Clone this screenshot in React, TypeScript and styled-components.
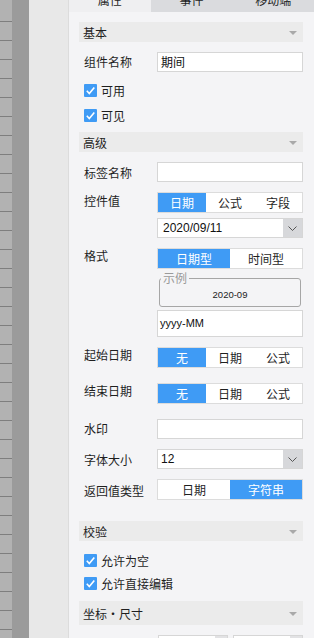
import React from "react";
import styled, { createGlobalStyle } from "styled-components";

const BLUE = "#3f9bf5";

const GlobalStyle = createGlobalStyle`
  * { box-sizing: border-box; }
  html, body {
    margin: 0;
    padding: 0;
    height: 638px;
    overflow: hidden;
  }
  body {
    font-family: "Noto Sans CJK SC", "Noto Sans", sans-serif;
    font-size: 12px;
    color: #1f1f1f;
  }
`;

const Page = styled.div`
  display: flex;
  width: 314px;
  height: 638px;
  overflow: hidden;
`;

const RulerStrip = styled.div`
  width: 12px;
  flex-shrink: 0;
  background: #b2b2b2;
  padding-top: 3px;
`;

const RulerTicks = styled.div`
  height: 100%;
  background: repeating-linear-gradient(
    to bottom,
    transparent 0 18px,
    #7e7e7e 18px 19px
  );
`;

const DarkStrip = styled.div`
  width: 17px;
  flex-shrink: 0;
  background: #9b9b9b;
`;

const Gutter = styled.div`
  width: 40px;
  flex-shrink: 0;
  background: #e8e8e8;
  border-right: 1px solid #dcdcdc;
`;

const Panel = styled.div`
  flex: 1;
  display: flex;
  flex-direction: column;
  background: #f4f4f6;
  min-width: 0;
`;

const TabBar = styled.div`
  display: grid;
  grid-template-columns: repeat(3, 1fr);
  height: 24px;
  margin-top: -12px;
  flex-shrink: 0;
`;

const Tab = styled.div<{ $active?: boolean }>`
  text-align: center;
  line-height: 24px;
  font-size: 12px;
  background: ${(p) => (p.$active ? "#efeff1" : "#dadbde")};
`;

const Content = styled.div`
  padding: 0 11px 0 10px;
  display: flex;
  flex-direction: column;
`;

const SectionHeader = styled.div<{ $mt: number; $h?: number }>`
  display: flex;
  justify-content: space-between;
  align-items: center;
  height: ${(p) => p.$h ?? 20}px;
  margin-top: ${(p) => p.$mt}px;
  padding: 0 6px 0 4px;
  background: #ebebeb;
  flex-shrink: 0;
`;

const Caret = styled.span`
  width: 0;
  height: 0;
  border-left: 4px solid transparent;
  border-right: 4px solid transparent;
  border-top: 4px solid #a9a9a9;
  margin-top: 2px;
`;

const Row = styled.div<{ $mt: number }>`
  display: flex;
  align-items: flex-start;
  margin-top: ${(p) => p.$mt}px;
  flex-shrink: 0;
`;

const Label = styled.div<{ $pt: number }>`
  width: 78px;
  flex-shrink: 0;
  padding-left: 5px;
  padding-top: ${(p) => p.$pt}px;
  line-height: 16px;
  white-space: nowrap;
`;

const Field = styled.div`
  flex: 1;
  min-width: 0;
  display: flex;
  flex-direction: column;
`;

const TextInput = styled.div<{ $h?: number; $mono?: boolean }>`
  height: ${(p) => p.$h ?? 20}px;
  line-height: ${(p) => (p.$h ?? 20) - 2}px;
  background: #fff;
  border: 1px solid #d6d6d6;
  padding-left: ${(p) => (p.$mono ? 2 : 3)}px;
  font-family: ${(p) =>
    p.$mono ? '"Liberation Sans", Arial, sans-serif' : "inherit"};
  font-size: ${(p) => (p.$mono ? 11 : 12)}px;
  color: #111;
`;

const Segmented = styled.div<{ $mt?: number }>`
  display: flex;
  height: 21px;
  margin-top: ${(p) => p.$mt ?? 0}px;
  background: #fff;
  border: 1px solid #dcdcdc;
`;

const Segment = styled.div<{ $active?: boolean }>`
  flex: 1;
  text-align: center;
  line-height: 19px;
  background: ${(p) => (p.$active ? BLUE : "transparent")};
  color: ${(p) => (p.$active ? "#fff" : "#1f1f1f")};
`;

const Select = styled.div<{ $mt?: number }>`
  display: flex;
  height: 20px;
  margin-top: ${(p) => p.$mt ?? 0}px;
  background: #fff;
  border: 1px solid #d6d6d6;
`;

const SelectValue = styled.div<{ $pl: number }>`
  flex: 1;
  padding-left: ${(p) => p.$pl}px;
  line-height: 18px;
  font-family: "Liberation Sans", Arial, sans-serif;
  font-size: 12px;
  color: #111;
`;

const SelectButton = styled.div`
  width: 19px;
  background: #d7d8db;
  display: flex;
  align-items: center;
  justify-content: center;
`;

const Example = styled.fieldset`
  margin: 3px 2px 0;
  padding: 0;
  min-width: 0;
  border: 1px solid #a6a6a6;
  border-radius: 3px;
`;

const ExampleLegend = styled.legend`
  margin-left: 1px;
  padding: 0 2px;
  font-size: 12px;
  line-height: 12px;
  color: #9a9a9a;
`;

const ExampleValue = styled.div`
  height: 22px;
  line-height: 22px;
  text-align: center;
  font-family: "Liberation Sans", Arial, sans-serif;
  font-size: 9.5px;
  color: #222;
`;

const CheckRow = styled.div<{ $mt: number }>`
  display: flex;
  align-items: center;
  gap: 4px;
  height: 20px;
  padding-left: 5px;
  margin-top: ${(p) => p.$mt}px;
  flex-shrink: 0;
`;

const SpinnerPair = styled.div`
  display: flex;
  gap: 5px;
  padding-left: 1px;
`;

const SpinnerBox = styled.div`
  flex: 1;
  height: 20px;
  display: flex;
  background: #fff;
  border: 1px solid #d6d6d6;
`;

const SpinnerText = styled.div`
  flex: 1;
`;

const SpinnerArrows = styled.div`
  width: 12px;
  background: #e2e2e4;
  display: flex;
  justify-content: center;
  padding-top: 3px;
`;

const SpinnerUp = styled.span`
  width: 0;
  height: 0;
  border-left: 3px solid transparent;
  border-right: 3px solid transparent;
  border-bottom: 3px solid #9a9a9a;
`;

function Chevron() {
  return (
    <svg width="9" height="5" viewBox="0 0 9 5">
      <polyline
        points="0.5,0.5 4.5,4.5 8.5,0.5"
        fill="none"
        stroke="#555"
        strokeWidth="1"
      />
    </svg>
  );
}

function CheckBox() {
  return (
    <svg width="13" height="13" viewBox="0 0 13 13">
      <rect width="13" height="13" rx="1" fill={BLUE} />
      <path
        d="M2.8 6.8 L5.3 9.5 L10.3 3.4"
        fill="none"
        stroke="#fff"
        strokeWidth="1.6"
      />
    </svg>
  );
}

function Header({ title, mt, h }: { title: string; mt: number; h?: number }) {
  return (
    <SectionHeader $mt={mt} $h={h}>
      <span>{title}</span>
      <Caret />
    </SectionHeader>
  );
}

function Options({ items, active }: { items: string[]; active: number }) {
  return (
    <Segmented>
      {items.map((item, i) => (
        <Segment key={item} $active={i === active}>
          {item}
        </Segment>
      ))}
    </Segmented>
  );
}

function Check({ text, mt }: { text: string; mt: number }) {
  return (
    <CheckRow $mt={mt}>
      <CheckBox />
      <span>{text}</span>
    </CheckRow>
  );
}

export default function App() {
  return (
    <>
      <GlobalStyle />
      <Page>
        <RulerStrip>
          <RulerTicks />
        </RulerStrip>
        <DarkStrip />
        <Gutter />
        <Panel>
          <TabBar>
            <Tab $active>属性</Tab>
            <Tab>事件</Tab>
            <Tab>移动端</Tab>
          </TabBar>
          <Content>
            <Header title="基本" mt={10} />
            <Row $mt={10}>
              <Label $pt={2}>组件名称</Label>
              <Field>
                <TextInput>期间</TextInput>
              </Field>
            </Row>
            <Check text="可用" mt={8} />
            <Check text="可见" mt={5} />

            <Header title="高级" mt={7} />
            <Row $mt={10}>
              <Label $pt={3}>标签名称</Label>
              <Field>
                <TextInput />
              </Field>
            </Row>
            <Row $mt={10}>
              <Label $pt={1}>控件值</Label>
              <Field>
                <Options items={["日期", "公式", "字段"]} active={0} />
                <Select $mt={5}>
                  <SelectValue $pl={5}>2020/09/11</SelectValue>
                  <SelectButton>
                    <Chevron />
                  </SelectButton>
                </Select>
              </Field>
            </Row>
            <Row $mt={10}>
              <Label $pt={0}>格式</Label>
              <Field>
                <Options items={["日期型", "时间型"]} active={0} />
                <Example>
                  <ExampleLegend>示例</ExampleLegend>
                  <ExampleValue>2020-09</ExampleValue>
                </Example>
                <TextInput $h={27} $mono style={{ marginTop: 3 }}>
                  yyyy-MM
                </TextInput>
              </Field>
            </Row>
            <Row $mt={10}>
              <Label $pt={0}>起始日期</Label>
              <Field>
                <Options items={["无", "日期", "公式"]} active={0} />
              </Field>
            </Row>
            <Row $mt={15}>
              <Label $pt={0}>结束日期</Label>
              <Field>
                <Options items={["无", "日期", "公式"]} active={0} />
              </Field>
            </Row>
            <Row $mt={15}>
              <Label $pt={2}>水印</Label>
              <Field>
                <TextInput />
              </Field>
            </Row>
            <Row $mt={10}>
              <Label $pt={3}>字体大小</Label>
              <Field>
                <Select>
                  <SelectValue $pl={3}>12</SelectValue>
                  <SelectButton>
                    <Chevron />
                  </SelectButton>
                </Select>
              </Field>
            </Row>
            <Row $mt={10}>
              <Label $pt={4}>返回值类型</Label>
              <Field>
                <Options items={["日期", "字符串"]} active={1} />
              </Field>
            </Row>

            <Header title="校验" mt={21} />
            <Check text="允许为空" mt={9} />
            <Check text="允许直接编辑" mt={3} />

            <Header title="坐标・尺寸" mt={8} h={24} />
            <Row $mt={10}>
              <Label $pt={2} />
              <Field>
                <SpinnerPair>
                  <SpinnerBox>
                    <SpinnerText />
                    <SpinnerArrows>
                      <SpinnerUp />
                    </SpinnerArrows>
                  </SpinnerBox>
                  <SpinnerBox>
                    <SpinnerText />
                    <SpinnerArrows>
                      <SpinnerUp />
                    </SpinnerArrows>
                  </SpinnerBox>
                </SpinnerPair>
              </Field>
            </Row>
          </Content>
        </Panel>
      </Page>
    </>
  );
}
